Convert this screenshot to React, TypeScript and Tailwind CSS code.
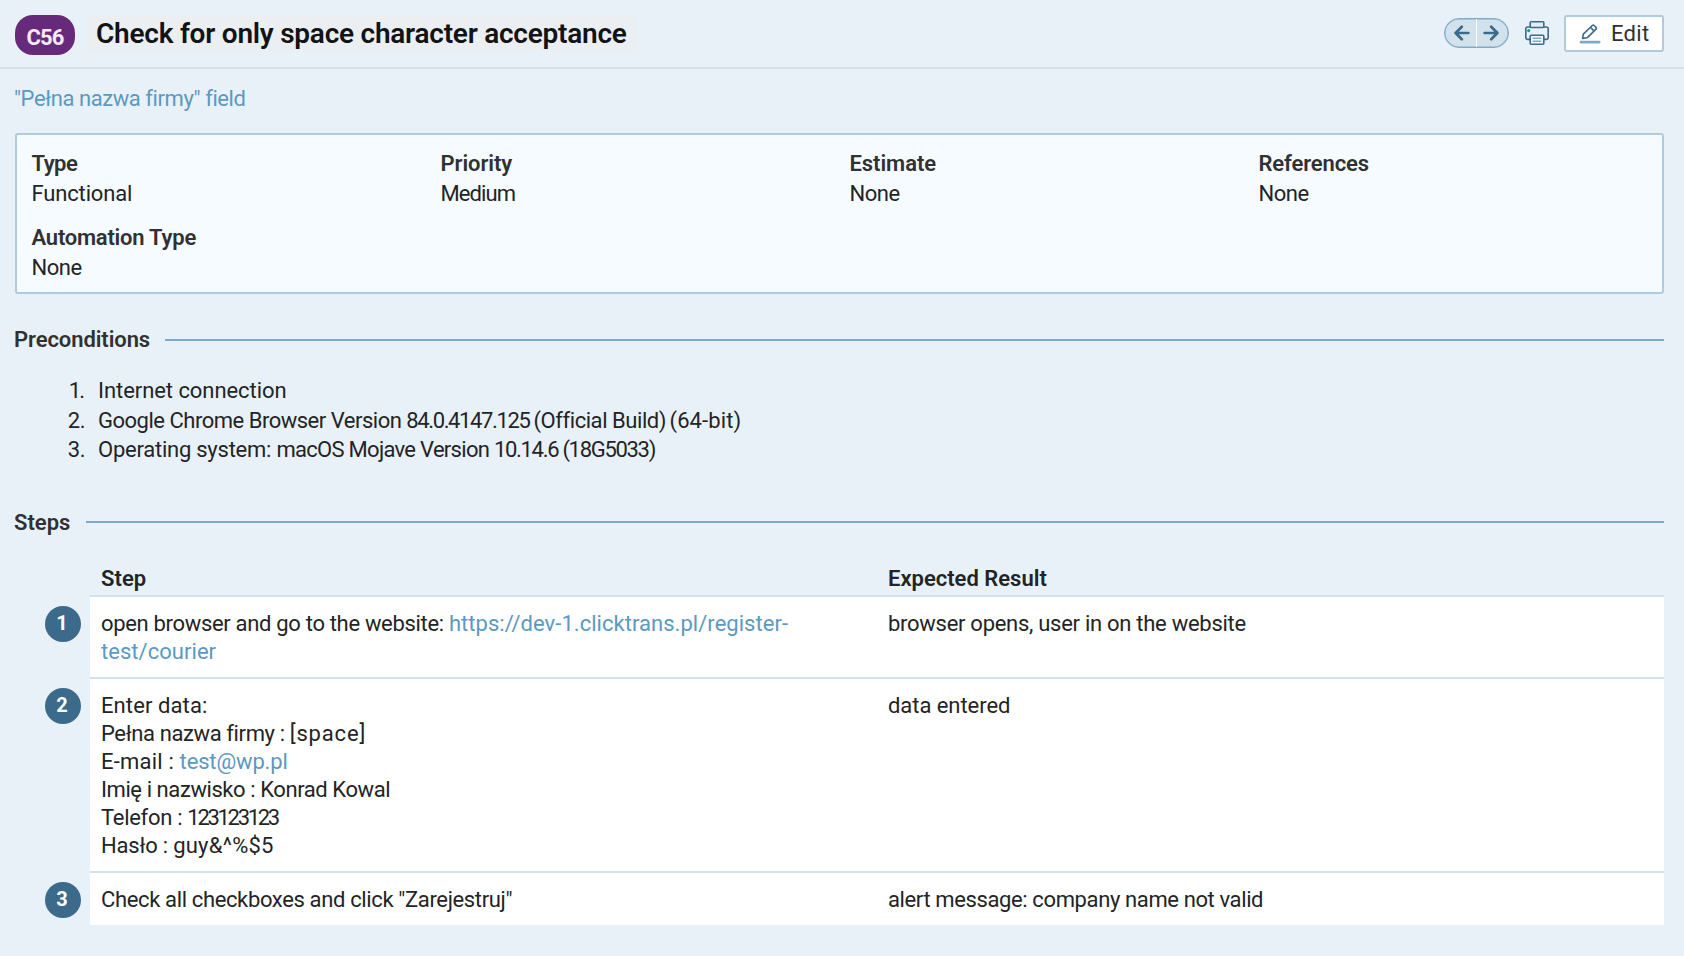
import type { ReactNode } from "react";

function ArrowIcon({ flip = false }: { flip?: boolean }) {
  return (
    <svg
      className={flip ? "h-4 w-4 rotate-180" : "h-4 w-4"}
      viewBox="0 0 16 16"
      fill="none"
      stroke="#3b6a8a"
      strokeWidth="2.7"
      strokeLinecap="round"
      strokeLinejoin="round"
    >
      <path d="M14.4 8H1.6M7.8 1.8 1.6 8l6.2 6.2" />
    </svg>
  );
}

function PrinterIcon() {
  return (
    <svg className="h-6 w-6" viewBox="0 0 24 24" fill="none" stroke="#3b6a8a" strokeWidth="1.6" strokeLinejoin="round">
      <path d="M5.3 18.4H2.6A1.8 1.8 0 0 1 .8 16.6V7.8A1.8 1.8 0 0 1 2.6 6h18.8a1.8 1.8 0 0 1 1.8 1.8v8.8a1.8 1.8 0 0 1-1.8 1.8h-2.7" />
      <rect x="5.2" y=".8" width="13.6" height="5.7" rx="1" fill="#e3edf5" />
      <rect x="5.2" y="14.2" width="13.6" height="9" rx="1" fill="#f5fbff" />
      <path d="M7.6 17.2h8.8M7.6 20.2h8.8" stroke="#7eaacb" strokeWidth="1.4" />
      <circle cx="3.7" cy="9.6" r="1.6" fill="#12a07a" stroke="none" />
    </svg>
  );
}

function PencilIcon() {
  return (
    <svg className="h-5 w-[22px]" viewBox="0 0 22 20" fill="none" stroke="#3b6a8a" strokeWidth="1.6" strokeLinejoin="round">
      <path d="m3.6 14.4.7-4.2 9-8.7a1.3 1.3 0 0 1 1.8 0l1.9 1.9a1.3 1.3 0 0 1 0 1.8l-8.9 8.6zM11.6 3.4l3.4 3.6" />
      <path d="M1.9 18.1h18.2" stroke="#7eaacb" strokeWidth="2.8" strokeLinecap="round" />
    </svg>
  );
}

function Field({ label, value, labelClass, valueClass }: { label: string; value: string; labelClass: string; valueClass: string }) {
  return (
    <div className="h-[74px] leading-[30px]">
      <div className={`font-semibold text-[#2f3133] ${labelClass}`}>{label}</div>
      <div className={valueClass}>{value}</div>
    </div>
  );
}

function SectionTitle({ title, className }: { title: string; className: string }) {
  return (
    <div className="-ml-px flex h-[30px] items-center leading-[30px]">
      <h2 className={`shrink-0 font-semibold text-[#2f3133] ${className}`}>{title}</h2>
      <div className="h-0.5 grow bg-[#7eaacb]" />
    </div>
  );
}

function StepRow({ index, step, result }: { index: number; step: ReactNode; result: ReactNode }) {
  return (
    <div className="flex">
      <div className="w-[75px] shrink-0 pt-[11px] pl-[30px]">
        <div className="flex h-9 w-9 items-center justify-center rounded-full bg-[#3b6a8a] pr-0.5 pb-0.5 text-[20px] leading-none font-bold text-white">
          {index}
        </div>
      </div>
      <div className="flex grow border-t-2 border-[#d2e2ec] bg-white pt-[13px] pb-[11px]">
        <div className="w-[787px] shrink-0 pl-[11px]">{step}</div>
        <div className="pl-[11px]">{result}</div>
      </div>
    </div>
  );
}

export default function App() {
  return (
    <div className="h-[956px] w-[1684px] overflow-hidden bg-[#e9f1f8] font-['Roboto',sans-serif] text-[22px] leading-[28px] whitespace-nowrap text-[#222426]">
      <header className="flex h-[69px] items-start border-b-2 border-[#d2e2ec] pr-5 pl-[15px]">
        <div className="mt-[15px] flex h-10 w-[60px] items-center justify-center rounded-[18px] bg-[#672a7b] pt-1.5 font-bold tracking-[-0.9px] text-[#f3eaf6]">
          C56
        </div>
        <h1 className="mt-[15px] ml-[13px] h-9 w-[548px] bg-[#eceff2] pl-2 text-[28px] leading-[38px] font-semibold tracking-[-0.24px] text-[#111314]">
          Check for only space character acceptance
        </h1>
        <div className="mt-[18px] ml-auto flex h-[30px] w-[65px] rounded-full border-[1.5px] border-[#7eaacb] bg-[#d2e2ec] shadow-[inset_0_0_0_0.5px_#7eaacb]">
          <button className="flex w-8 items-center justify-center border-r border-white pl-[3px]">
            <ArrowIcon />
          </button>
          <button className="flex grow items-center justify-center pr-1">
            <ArrowIcon flip />
          </button>
        </div>
        <button className="mt-[21px] ml-4">
          <PrinterIcon />
        </button>
        <button className="mt-[15px] ml-[15px] flex h-[37px] w-[100px] items-center rounded-[3px] border-2 border-[#b0cadf] bg-white pl-[13px] tracking-[0.3px]">
          <PencilIcon />
          <span className="ml-[10px] text-[#2f3133]">Edit</span>
        </button>
      </header>

      <main className="pr-5 pl-[15px]">
        <a className="mt-[15px] -ml-px block leading-[30px] tracking-[-0.43px] text-[#5c99c1]">"Pełna nazwa firmy" field</a>

        <section className="mt-[19px] grid h-[161px] grid-cols-[409px_409px_409px_1fr] content-start rounded-[3px] border-2 border-[#b0cadf] bg-[#f6fbff] pt-[14px] pl-[14.5px]">
          <Field label="Type" value="Functional" labelClass="tracking-[-0.5px]" valueClass="tracking-[-0.15px]" />
          <Field label="Priority" value="Medium" labelClass="tracking-[-0.05px]" valueClass="tracking-[-0.9px]" />
          <Field label="Estimate" value="None" labelClass="tracking-[-0.05px]" valueClass="tracking-[-0.5px]" />
          <Field label="References" value="None" labelClass="tracking-[-0.12px]" valueClass="tracking-[-0.5px]" />
          <Field label="Automation Type" value="None" labelClass="tracking-[-0.23px]" valueClass="tracking-[-0.5px]" />
        </section>

        <div className="mt-[31px]">
          <SectionTitle title="Preconditions" className="w-[151px] tracking-[-0.08px]" />
        </div>
        <ol className="mt-[21px] leading-[29.5px]">
          <li className="flex">
            <span className="w-[70px] text-right">
              <span className="tracking-[-2px]">1</span>.
            </span>
            <span className="ml-[13px] tracking-[-0.06px]">Internet connection</span>
          </li>
          <li className="flex">
            <span className="w-[70px] text-right tracking-[-0.5px]">2.</span>
            <span className="ml-[13px]">
              <span className="tracking-[-0.49px]">Google Chrome Browser Version </span>
              <span className="tracking-[-1.38px]">84.0.4147.125 </span>
              <span className="tracking-[-0.44px]">(Official Build)</span>
              <span className="tracking-[-2px]"> </span>
              <span className="tracking-[0.1px]">(64-bit)</span>
            </span>
          </li>
          <li className="flex">
            <span className="w-[70px] text-right tracking-[-0.5px]">3.</span>
            <span className="ml-[13px]">
              <span className="tracking-[-0.24px]">Operating system: </span>
              <span className="tracking-[-0.71px]">macOS Mojave Version </span>
              <span className="tracking-[-1.3px]">10.14.6 (18G5033)</span>
            </span>
          </li>
        </ol>

        <div className="mt-[42.5px]">
          <SectionTitle title="Steps" className="w-[72px] pt-px tracking-[0px]" />
        </div>

        <section className="mt-7">
          <div className="flex h-[30px] pl-[75px] font-semibold">
            <div className="w-[787px] pl-[11px] tracking-[0.05px]">Step</div>
            <div className="pl-[11px]">Expected Result</div>
          </div>
          <StepRow
            index={1}
            step={
              <>
                <span className="tracking-[-0.32px]">open browser and go to the website: </span>
                <a className="tracking-[0.04px] text-[#5c99c1]">
                  https://dev-1.clicktrans.pl/register-
                  <br />
                  test/courier
                </a>
              </>
            }
            result={<span className="tracking-[-0.28px]">browser opens, user in on the website</span>}
          />
          <StepRow
            index={2}
            step={
              <>
                <div className="tracking-[0.1px]">Enter data:</div>
                <div>
                  <span className="tracking-[-0.38px]">Pełna nazwa firmy </span>
                  <span className="tracking-[-0.4px]">: </span>
                  <span className="tracking-[0.85px]">[space]</span>
                </div>
                <div>
                  <span className="tracking-[0.2px]">E-mail : </span>
                  <a className="tracking-[-0.15px] text-[#5c99c1]">test@wp.pl</a>
                </div>
                <div className="tracking-[-0.42px]">Imię i nazwisko : Konrad Kowal</div>
                <div>
                  <span className="tracking-[-0.3px]">Telefon : </span>
                  <span className="tracking-[-2.3px]">123123123</span>
                </div>
                <div>
                  <span className="tracking-[-0.2px]">Hasło : </span>
                  <span className="tracking-[0.24px]">guy&amp;^%$5</span>
                </div>
              </>
            }
            result={<span className="tracking-[-0.05px]">data entered</span>}
          />
          <StepRow
            index={3}
            step={<span className="tracking-[-0.36px]">Check all checkboxes and click "Zarejestruj"</span>}
            result={<span className="tracking-[-0.38px]">alert message: company name not valid</span>}
          />
        </section>
      </main>
    </div>
  );
}
